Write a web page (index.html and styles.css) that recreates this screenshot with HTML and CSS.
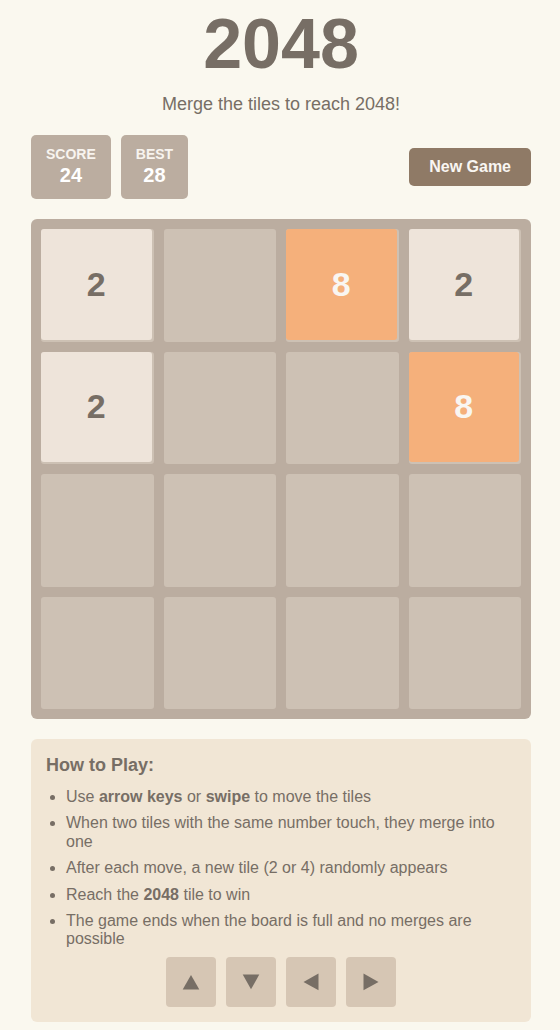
FILE: index.html
```html
<!DOCTYPE html>
<html lang="en">
<head>
<meta charset="utf-8">
<title>2048</title>
<link rel="stylesheet" href="styles.css">
</head>
<body>
<div class="container">
  <h1 class="title">2048</h1>
  <p class="subtitle">Merge the tiles to reach 2048!</p>
  <div class="top-row">
    <div class="scores">
      <div class="score-box"><div class="score-label">SCORE</div><div class="score-value">24</div></div>
      <div class="score-box"><div class="score-label">BEST</div><div class="score-value">28</div></div>
    </div>
    <button class="new-game">New Game</button>
  </div>
  <div class="board">
    <div class="cell"><div class="tile t2">2</div></div>
    <div class="cell"></div>
    <div class="cell"><div class="tile t8">8</div></div>
    <div class="cell"><div class="tile t2">2</div></div>
    <div class="cell"><div class="tile t2">2</div></div>
    <div class="cell"></div>
    <div class="cell"></div>
    <div class="cell"><div class="tile t8">8</div></div>
    <div class="cell"></div>
    <div class="cell"></div>
    <div class="cell"></div>
    <div class="cell"></div>
    <div class="cell"></div>
    <div class="cell"></div>
    <div class="cell"></div>
    <div class="cell"></div>
  </div>
  <div class="howto">
    <div class="howto-title">How to Play:</div>
    <ul class="rules">
      <li>Use <b>arrow keys</b> or <b>swipe</b> to move the tiles</li>
      <li>When two tiles with the same number touch, they merge into one</li>
      <li>After each move, a new tile (2 or 4) randomly appears</li>
      <li>Reach the <b>2048</b> tile to win</li>
      <li>The game ends when the board is full and no merges are possible</li>
    </ul>
    <div class="controls">
      <button class="arrow" aria-label="Up"><svg width="18" height="16" viewBox="0 0 18 16"><polygon points="9,1 17.3,15.6 0.7,15.6" fill="#776e65"/></svg></button>
      <button class="arrow" aria-label="Down"><svg width="18" height="16" viewBox="0 0 18 16"><polygon points="0.7,0.6 17.3,0.6 9,15.2" fill="#776e65"/></svg></button>
      <button class="arrow" aria-label="Left"><svg width="16" height="18" viewBox="0 0 16 18"><polygon points="15.5,0.6 15.5,17.3 0.5,9" fill="#776e65"/></svg></button>
      <button class="arrow" aria-label="Right"><svg width="16" height="18" viewBox="0 0 16 18"><polygon points="0.5,0.6 0.5,17.3 15.5,9" fill="#776e65"/></svg></button>
    </div>
  </div>
</div>
</body>
</html>
```
FILE: styles.css
```css
html, body {
  margin: 0;
  background: #faf8ef;
}
body {
  padding: 0 0 0 2px;
  font-family: "Liberation Sans", Arial, Helvetica, sans-serif;
  color: #776e65;
}
.container {
  width: 500px;
  margin: 0 auto;
  padding-top: 9px;
}
.title {
  margin: 0;
  font-size: 70px;
  line-height: 70px;
  font-weight: bold;
  text-align: center;
  color: #776e65;
}
.subtitle {
  margin: 15px 0 0;
  font-size: 18px;
  line-height: 20.7px;
  text-align: center;
}
.top-row {
  margin-top: 20.5px;
  display: flex;
  justify-content: space-between;
  align-items: center;
}
.scores {
  display: flex;
  gap: 10px;
}
.score-box {
  background: #bbada0;
  border-radius: 5px;
  padding: 11px 15px 12px;
  color: #ffffff;
  text-align: center;
  font-weight: bold;
}
.score-label {
  font-size: 14px;
  line-height: 17px;
  color: #f8f4ef;
}
.score-value {
  font-size: 20px;
  line-height: 24px;
}
.new-game {
  font-family: "Liberation Sans", Arial, Helvetica, sans-serif;
  font-size: 16px;
  font-weight: bold;
  line-height: 18px;
  padding: 10px 20px;
  background: #8f7a66;
  color: #f9f6f2;
  border: none;
  border-radius: 5px;
}
.board {
  margin-top: 20px;
  background: #bbada0;
  border-radius: 6px;
  padding: 10px;
  display: grid;
  grid-template-columns: repeat(4, 1fr);
  gap: 10px;
}
.cell {
  aspect-ratio: 1 / 1;
  background: #cdc1b4;
  border-radius: 3px;
}
.tile {
  width: calc(100% - 2px);
  height: calc(100% - 2px);
  border-radius: 3px;
  display: flex;
  align-items: center;
  justify-content: center;
  font-size: 34px;
  font-weight: bold;
}
.t2 {
  background: #eee4da;
  color: #776e65;
}
.t8 {
  background: #f5b07b;
  color: #f9f6f2;
}
.howto {
  margin-top: 20px;
  background: #f1e6d5;
  border-radius: 6px;
  padding: 16px 15px 15px;
}
.howto-title {
  font-size: 18px;
  line-height: 20.7px;
  font-weight: bold;
  margin: 0 0 12px;
}
.rules {
  margin: 0;
  padding-left: 20px;
  font-size: 16px;
  line-height: 18.4px;
}
.rules li {
  margin-bottom: 8px;
}
.rules li:last-child {
  margin-bottom: 0;
}
.controls {
  margin-top: 8px;
  display: flex;
  justify-content: center;
  gap: 10px;
}
.arrow {
  width: 50px;
  height: 50px;
  padding: 0;
  border: none;
  border-radius: 4px;
  background: #d6c6b4;
  display: flex;
  align-items: center;
  justify-content: center;
}
.arrow svg {
  display: block;
}
```
